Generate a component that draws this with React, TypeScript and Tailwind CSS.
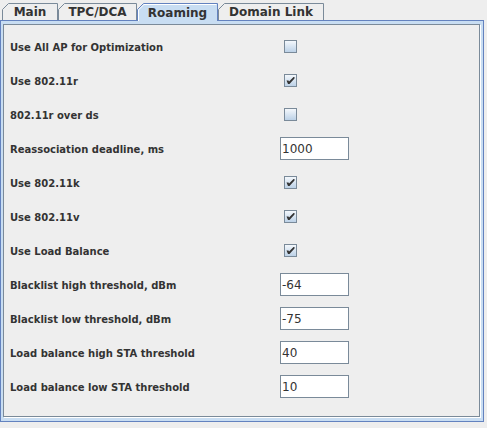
import React from "react";

type Row = { label: string; kind: "check" | "text"; checked?: boolean; value?: string };

const rows: Row[] = [
  { label: "Use All AP for Optimization", kind: "check", checked: false },
  { label: "Use 802.11r", kind: "check", checked: true },
  { label: "802.11r over ds", kind: "check", checked: false },
  { label: "Reassociation deadline, ms", kind: "text", value: "1000" },
  { label: "Use 802.11k", kind: "check", checked: true },
  { label: "Use 802.11v", kind: "check", checked: true },
  { label: "Use Load Balance", kind: "check", checked: true },
  { label: "Blacklist high threshold, dBm", kind: "text", value: "-64" },
  { label: "Blacklist low threshold, dBm", kind: "text", value: "-75" },
  { label: "Load balance high STA threshold", kind: "text", value: "40" },
  { label: "Load balance low STA threshold", kind: "text", value: "10" },
];

const tabs = [
  { name: "Main", w: 56 },
  { name: "TPC/DCA", w: 79 },
  { name: "Roaming", w: 81, selected: true },
  { name: "Domain Link", w: 106 },
];

function Tab({ name, w, selected }: { name: string; w: number; selected?: boolean }) {
  const h = selected ? 19 : 18;
  const stroke = selected ? "#6382bf" : "#7a8a99";
  const fill = selected ? "#c8ddf2" : "#eeeeee";
  return (
    <div
      className={
        "relative flex items-center justify-center shrink-0 " +
        (selected ? "h-[19px] -mb-px" : "h-[18px]")
      }
      style={{ width: w }}
    >
      <svg className="absolute inset-0" width={w} height={h} viewBox={`0 0 ${w} ${h}`}>
        <path d={`M0.5 ${h} V7.5 L6.5 1.5 H${w - 0.5} V${h} Z`} fill={fill} stroke="none" />
        <path
          d={`M0.5 ${h} V7.5 L6.5 1.5 H${w - 0.5} V${h}`}
          fill="none"
          stroke={stroke}
          strokeWidth={1}
        />
        {selected && (
          <path d={`M1.5 ${h} V7.9 L6.9 2.5 H${w - 1.5}`} fill="none" stroke="#ffffff" strokeWidth={1} />
        )}
      </svg>
      <span className="relative pt-[2px] text-[12px] font-bold leading-none text-[#333333] font-['DejaVu_Sans',sans-serif]">
        {name}
      </span>
    </div>
  );
}

function CheckBox({ checked }: { checked?: boolean }) {
  return (
    <div className="ml-[4px] w-[13px] h-[13px] border border-[#7a8a99] bg-gradient-to-b from-[#f4f8fc] to-[#bcd1e7] relative">
      {checked && (
        <svg className="absolute left-[-1px] top-[-1px]" width="13" height="13" viewBox="0 0 13 13">
          <path d="M2.5 6.5 L4.5 6.5 L5 7.5 L9.5 3 L10.5 3 L10.5 4.5 L5.5 10 L4 10 Z" fill="#333333" />
        </svg>
      )}
    </div>
  );
}

export default function App() {
  return (
    <div className="w-[487px] h-[428px] bg-[#eeeeee] flex flex-col font-['DejaVu_Sans',sans-serif]">
      <div className="relative z-10 h-[20px] flex items-end pl-[2px]">
        {tabs.map((t) => (
          <Tab key={t.name} {...t} />
        ))}
      </div>
      <div className="w-[484px] h-[402px] border border-[#6382bf] bg-[#c8ddf2] pt-[3px] pl-[2px] pr-[3px] pb-[4px] flex">
        <div className="flex-1 border border-[#7a8a99] bg-[#eeeeee] shadow-[1px_1px_0_#ffffff] pt-[10px] pl-[6px] flex flex-col gap-[11px]">
          {rows.map((r) => (
            <div key={r.label} className="flex items-center h-[23px]">
              <div className="w-[270px] pt-[2px] text-[10px] font-bold text-[#333333] leading-none">{r.label}</div>
              {r.kind === "check" ? (
                <CheckBox checked={r.checked} />
              ) : (
                <div className="w-[69px] h-[23px] border border-[#7a8a99] bg-white flex items-center pl-[1px] text-[12px] text-[#333333] leading-none">
                  {r.value}
                </div>
              )}
            </div>
          ))}
        </div>
      </div>
    </div>
  );
}
